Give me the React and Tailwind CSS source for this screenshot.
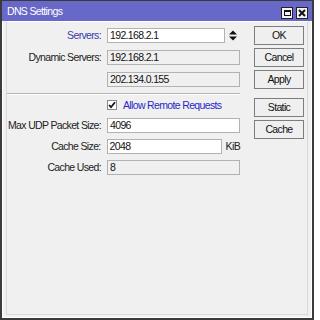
import React from "react";

const font = "font-['Liberation_Sans',Arial,sans-serif]";

function Field({ w = 133, value, readOnly }) {
  return (
    <div
      className={`h-[15px] border border-[#b2b2b2] pl-[2px] flex items-center text-[#111] leading-none ${readOnly ? "bg-[#f0f0f0]" : "bg-white"}`}
      style={{ width: w }}
    >
      {value}
    </div>
  );
}

function Row({ label, blue, h = 22, children }) {
  return (
    <div className="flex items-center" style={{ height: h }}>
      <div className={`w-[94px] text-right leading-none ${blue ? "text-[#3a3aa8]" : "text-[#222]"}`}>{label}</div>
      <div className="ml-[6px] flex items-center">{children}</div>
    </div>
  );
}

function Btn({ children, className = "" }) {
  return (
    <div className={`w-[50px] h-[19px] border border-[#7d7d7d] bg-[#efefef] flex items-center justify-center text-[#111] leading-none ${className}`}>
      {children}
    </div>
  );
}

export default function App() {
  return (
    <div className={`w-[314px] h-[320px] flex flex-col border-x-2 border-b-2 border-t border-[#3a3a3a] bg-[#f0f0f0] text-[10.5px] tracking-[-0.65px] ${font}`}>
      {/* title bar */}
      <div className="h-[20px] bg-[#6868c8] flex items-center pl-[5px] pr-[4px] text-white">
        <span className="flex-1 leading-none pt-[1px]">DNS Settings</span>
        <div className="mt-[3px] w-[12px] h-[12px] border border-[#222] bg-[#f4f4f4] flex items-center justify-center">
          <div className="w-[7px] h-[6px] border border-t-2 border-[#111]" />
        </div>
        <div className="ml-[3px] mt-[3px] w-[12px] h-[12px] border border-[#222] bg-[#f4f4f4] flex items-center justify-center">
          <svg width="8" height="8" viewBox="0 0 8 8">
            <path d="M1 1 L7 7 M7 1 L1 7" stroke="#111" strokeWidth="2" />
          </svg>
        </div>
      </div>

      <div className="flex-1 flex flex-col border-x border-b border-white px-[3px] pb-[2px]">
        <div className="flex-1 border border-[#dadada] border-t-white flex">
          {/* fields */}
          <div className="w-[233px] pt-[2px] flex flex-col">
            <Row label="Servers:" blue>
              <Field w={118} value="192.168.2.1" />
              <svg className="ml-[4px]" width="8" height="11" viewBox="0 0 8 11">
                <path d="M0 4.5 L4 0.5 L8 4.5 Z M0 6.5 L8 6.5 L4 10.5 Z" fill="#111" />
              </svg>
            </Row>
            <Row label="Dynamic Servers:">
              <Field value="192.168.2.1" readOnly />
            </Row>
            <Row label="">
              <Field value="202.134.0.155" readOnly />
            </Row>
            <div className="mt-[3px] border-t border-b border-t-[#b4b4b4] border-b-white" />
            <Row label="" h={20}>
              <div className="w-[10px] h-[10px] border border-[#8a8a8a] bg-white flex items-center justify-center">
                <svg width="8" height="8" viewBox="0 0 8 8">
                  <path d="M1 4 L3 6.2 L7 1.2" stroke="#111" strokeWidth="1.8" fill="none" />
                </svg>
              </div>
              <span className="ml-[6px] text-[#2828c8] leading-none">Allow Remote Requests</span>
            </Row>
            <Row label="Max UDP Packet Size:" h={21}>
              <Field value="4096" />
            </Row>
            <Row label="Cache Size:" h={21}>
              <Field w={115} value="2048" />
              <span className="ml-[4px] text-[#222] leading-none">KiB</span>
            </Row>
            <Row label="Cache Used:" h={21}>
              <Field value="8" readOnly />
            </Row>
          </div>

          {/* buttons */}
          <div className="ml-[14px] pt-[4px] flex flex-col gap-[3px]">
            <Btn>OK</Btn>
            <Btn>Cancel</Btn>
            <Btn>Apply</Btn>
            <Btn className="mt-[6px]">Static</Btn>
            <Btn>Cache</Btn>
          </div>
        </div>
      </div>
    </div>
  );
}
